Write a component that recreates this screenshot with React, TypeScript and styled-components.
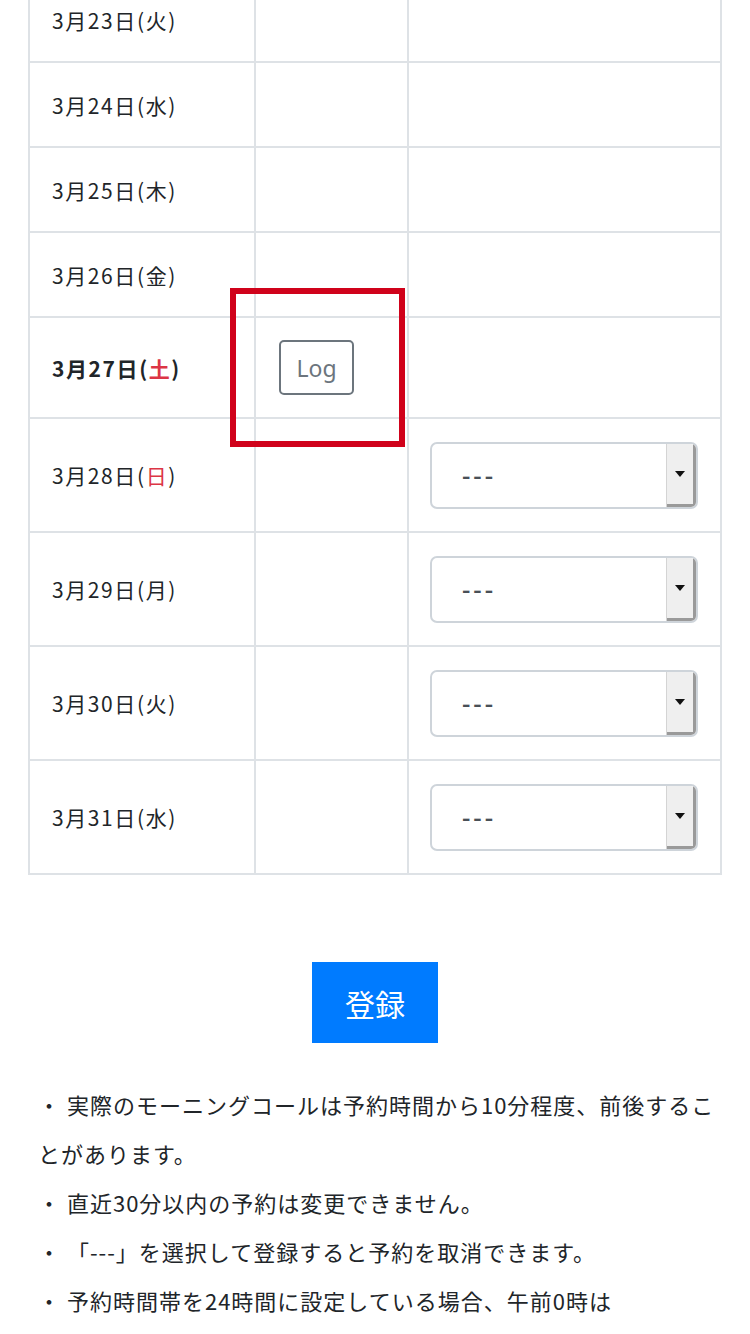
import React from 'react';
import styled, { createGlobalStyle } from 'styled-components';

type Day = {
	label: string;
	weekday: string;
	holiday?: boolean;
	bold?: boolean;
	log?: boolean;
	select?: boolean;
};

const days: Day[] = [
	{ label: '3月23日', weekday: '火' },
	{ label: '3月24日', weekday: '水' },
	{ label: '3月25日', weekday: '木' },
	{ label: '3月26日', weekday: '金' },
	{ label: '3月27日', weekday: '土', holiday: true, bold: true, log: true },
	{ label: '3月28日', weekday: '日', holiday: true, select: true },
	{ label: '3月29日', weekday: '月', select: true },
	{ label: '3月30日', weekday: '火', select: true },
	{ label: '3月31日', weekday: '水', select: true },
];

const notes = [
	'実際のモーニングコールは予約時間から10分程度、前後することがあります。',
	'直近30分以内の予約は変更できません。',
	'「---」を選択して登録すると予約を取消できます。',
	'予約時間帯を24時間に設定している場合、午前0時は',
];

const rowHeight = (d: Day) => (d.select ? 114 : d.log ? 101 : 85);

const App = () => {
	return (
		<>
			<GlobalStyle />
			<Page>
				<Table>
					<colgroup>
						<col style={{ width: 226 }} />
						<col style={{ width: 153 }} />
						<col />
					</colgroup>
					<tbody>
						{days.map((d) => (
							<Row key={d.label} $height={rowHeight(d)}>
								<DateCell $bold={d.bold}>
									{d.label}(<Weekday $holiday={d.holiday}>{d.weekday}</Weekday>)
								</DateCell>
								<LogCell>
									{d.log && (
										<LogWrap>
											<LogButton type='button'>Log</LogButton>
											<Highlight />
										</LogWrap>
									)}
								</LogCell>
								<SelectCell>
									{d.select && (
										<SelectBox>
											<Select defaultValue=''>
												<option value=''>---</option>
												<option value='06:00'>06:00</option>
												<option value='07:00'>07:00</option>
											</Select>
											<ArrowBox>
												<svg width='10' height='6' viewBox='0 0 10 6'>
													<path d='M0 0h10L5 6z' fill='#111' />
												</svg>
											</ArrowBox>
										</SelectBox>
									)}
								</SelectCell>
							</Row>
						))}
					</tbody>
				</Table>
				<SubmitRow>
					<SubmitButton type='button'>登録</SubmitButton>
				</SubmitRow>
				<Notes>
					{notes.map((n) => (
						<li key={n}>・ {n}</li>
					))}
				</Notes>
			</Page>
		</>
	);
};

export default App;

const GlobalStyle = createGlobalStyle`
	html, body {
		margin: 0;
		padding: 0;
		background: #fff;
		overflow: hidden;
	}
	body {
		font-family: 'Noto Sans CJK JP', 'Noto Sans', 'Liberation Sans', sans-serif;
		color: #212529;
	}
`;

const Page = styled.div`
	width: 750px;
	padding: 0 28px;
	box-sizing: border-box;
	margin-top: -24px;
`;

const Table = styled.table`
	width: 100%;
	border-collapse: collapse;
	table-layout: fixed;
	td {
		border: 2px solid #dee2e6;
		vertical-align: middle;
		padding: 0 23px;
		box-sizing: border-box;
	}
`;

const Row = styled.tr<{ $height: number }>`
	height: ${(p) => p.$height}px;
`;

const DateCell = styled.td<{ $bold?: boolean }>`
	font-size: 21px;
	letter-spacing: 1.6px;
	font-weight: ${(p) => (p.$bold ? 700 : 400)};
	color: #212529;
	white-space: nowrap;
	&& {
		padding-left: 22px;
	}
`;

const Weekday = styled.span<{ $holiday?: boolean }>`
	color: ${(p) => (p.$holiday ? '#dc3545' : 'inherit')};
`;

const LogCell = styled.td``;

const SelectCell = styled.td`
	&& {
		padding: 0 22px 0 21px;
	}
`;

const LogWrap = styled.div`
	position: relative;
	display: inline-block;
`;

const LogButton = styled.button`
	display: block;
	width: 75px;
	height: 55px;
	border: 2px solid #6c757d;
	border-radius: 5px;
	background: #fff;
	color: #6c757d;
	font-family: 'Noto Sans', 'Liberation Sans', sans-serif;
	font-size: 23px;
	padding: 0;
	cursor: pointer;
`;

const Highlight = styled.div`
	position: absolute;
	left: -49px;
	top: -52px;
	width: 175px;
	height: 159px;
	border: 6px solid #d0021b;
	box-sizing: border-box;
	pointer-events: none;
`;

const SelectBox = styled.div`
	display: flex;
	height: 67px;
	border: 2px solid #ced4da;
	border-radius: 7px;
	box-sizing: border-box;
	background: #fff;
	overflow: hidden;
`;

const Select = styled.select`
	flex: 1;
	min-width: 0;
	border: none;
	outline: none;
	appearance: none;
	-webkit-appearance: none;
	background: transparent;
	font-family: 'Noto Sans', 'Liberation Sans', sans-serif;
	font-size: 26px;
	font-weight: 500;
	color: #495057;
	padding: 0 0 0 30px;
	letter-spacing: 3px;
`;

const ArrowBox = styled.div`
	width: 26px;
	display: flex;
	align-items: center;
	justify-content: center;
	background: #efefef;
	border-left: 1px solid #d4d4d4;
	box-shadow: inset -3px -3px 0 #9a9a9a;
	padding-right: 3px;
	padding-bottom: 2px;
`;

const SubmitRow = styled.div`
	display: flex;
	justify-content: center;
	padding-top: 87px;
`;

const SubmitButton = styled.button`
	width: 126px;
	height: 81px;
	border: none;
	background: #007bff;
	color: #fff;
	font-family: 'Noto Sans CJK JP', sans-serif;
	font-size: 30px;
	cursor: pointer;
`;

const Notes = styled.ul`
	list-style: none;
	margin: 0;
	padding: 37px 0 0 10px;
	li {
		font-size: 22px;
		letter-spacing: 1px;
		line-height: 49px;
		color: #212529;
	}
`;
